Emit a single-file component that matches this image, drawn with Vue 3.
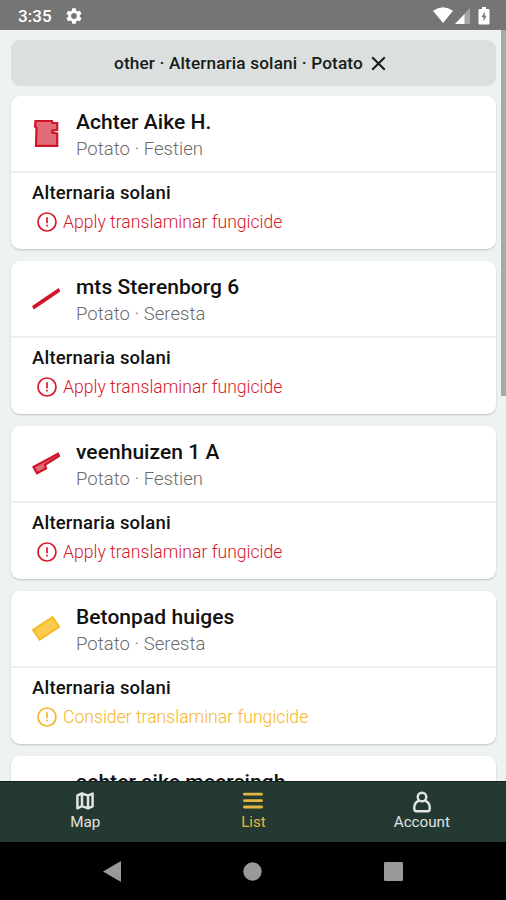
<script setup>
const fields = [
  { name: 'Achter Aike H.', crop: 'Potato · Festien', advice: 'Apply translaminar fungicide', tone: 'red', shape: 'M3.5 3H20L20.5 5H25.2V12L20.2 12.5V14.5L25.2 15.5V27.8H4L4.500 10L3 8.500Z' },
  { name: 'mts Sterenborg 6', crop: 'Potato · Seresta', advice: 'Apply translaminar fungicide', tone: 'red', shape: 'M1.500 23.500L26.300 6.700L27 8L2.200 24.800Z' },
  { name: 'veenhuizen 1 A', crop: 'Potato · Festien', advice: 'Apply translaminar fungicide', tone: 'red', shape: 'M1.500 19L26 5.800L27 8L13 16.800L14 20.500L5 25.300Z' },
  { name: 'Betonpad huiges', crop: 'Potato · Seresta', advice: 'Consider translaminar fungicide', tone: 'amber', shape: 'M1.2 17L20.5 4.2L27 13.8L7.6 26.5Z' },
  { name: 'achter aike meersingh', tone: 'amber' },
]
</script>

<template>
  <div class="screen">
    <header class="status">
      <span class="clock">3:35</span>
      <svg class="gear" width="18" height="18" viewBox="2 2 20 20"><path fill="#fff" d="M19.14 12.94a7 7 0 0 0 .05-.94 7 7 0 0 0-.06-.94l2.03-1.58a.49.49 0 0 0 .12-.61l-1.92-3.32a.49.49 0 0 0-.59-.22l-2.39.96a7 7 0 0 0-1.62-.94l-.36-2.54A.48.48 0 0 0 13.920 2.4h-3.84a.48.48 0 0 0-.47.41l-.36 2.54a7 7 0 0 0-1.62.94l-2.39-.96a.48.48 0 0 0-.59.22L2.740 8.870a.48.48 0 0 0 .12.610l2.030 1.580a7 7 0 0 0 0 1.880l-2.030 1.580a.49.49 0 0 0-.12.610l1.920 3.320c.12.220.370.290.590.220l2.390-.960a7 7 0 0 0 1.620.940l.360 2.540c.05.240.240.410.480.410h3.840c.240 0 .440-.170.470-.410l.360-2.540a7 7 0 0 0 1.620-.940l2.390.960c.220.080.470 0 .590-.220l1.920-3.320a.48.48 0 0 0-.12-.610zM12 15.600a3.600 3.600 0 1 1 0-7.200 3.600 3.600 0 0 1 0 7.200z" /></svg>
      <span class="spacer"></span>
      <svg width="20" height="17" viewBox="0 0 20 17"><path fill="#fff" d="M0 3.800Q10-3.200 20 3.800L10 16Z" /></svg>
      <svg class="signal" width="15" height="16" viewBox="0 0 15 16"><path fill="#a5a5a5" d="M15 0V16H0Z" /><path fill="#fff" d="M9.500 5.900V16H0Z" /></svg>
      <svg class="battery" width="12" height="18" viewBox="0 0 12 18"><path fill="#fff" d="M4 0H8V2H10.500Q11.500 2 11.500 3V16.500Q11.500 17.500 10.500 17.500H1.500Q.5 17.500.5 16.500V3Q.5 2 1.500 2H4Z" /><path fill="#777" d="M7.200 4.300L3.500 10H5.500V14.600L8.600 8.700H6.600Z" /></svg>
    </header>

    <main class="content">
      <div class="filter">
        <span>other · Alternaria solani · Potato</span>
        <svg width="15" height="15" viewBox="0 0 15 15"><path fill="none" stroke="#171c19" stroke-width="2" d="M1.200 1.200L13.800 13.800M13.800 1.200L1.200 13.800" /></svg>
      </div>
      <article v-for="field in fields" :key="field.name" class="card" :class="field.tone">
        <div class="summary">
          <svg class="plot" width="28" height="30" viewBox="0 0 28 30"><path v-if="field.shape" :d="field.shape" /></svg>
          <div>
            <h2>{{ field.name }}</h2>
            <p v-if="field.crop" class="crop">{{ field.crop }}</p>
          </div>
        </div>
        <div v-if="field.advice" class="detail">
          <h3>Alternaria solani</h3>
          <p class="advice">
            <svg width="20" height="20" viewBox="0 0 20 20" fill="none" stroke="currentColor" stroke-width="1.700"><circle cx="10" cy="10" r="9" /><path d="M10 5.300V11.300M10 12.700V14.400" /></svg>
            <span>{{ field.advice }}</span>
          </p>
        </div>
      </article>
      <div class="scrollbar"></div>
    </main>

    <nav class="tabs">
      <div class="tab map">
        <svg width="18" height="18" viewBox="0 0 18 18" fill="none" stroke="currentColor" stroke-width="2.500" stroke-linejoin="round"><path d="M1.400 3.500L6 1.500L12 3.700L16.600 1.600V14.300L12 16.400L6 14.200L1.400 16.300ZM6 1.500V14.200M12 3.700V16.400" /></svg>
        <span>Map</span>
      </div>
      <div class="tab active">
        <svg width="20" height="18" viewBox="0 0 20 18" fill="none" stroke="currentColor" stroke-width="2.800" stroke-linecap="round"><path d="M1.400 2.200H18.600M1.400 8.600H18.600M1.400 15H18.600" /></svg>
        <span>List</span>
      </div>
      <div class="tab account">
        <svg width="18" height="22" viewBox="0 0 18 22" fill="none" stroke="currentColor" stroke-width="2.400" stroke-linejoin="round"><circle cx="9" cy="6" r="4.300" /><path d="M6 9.700C2.800 11 1.300 13.200 1.300 16.500V18Q1.300 20.200 3.500 20.200H14.500Q16.700 20.200 16.700 18V16.500C16.700 13.200 15.200 11 12 9.700" /></svg>
        <span>Account</span>
      </div>
    </nav>

    <footer class="system">
      <svg width="18" height="21" viewBox="0 0 18 21"><path fill="#999" d="M0 10.500L18 0V21Z" /></svg>
      <svg width="19" height="19" viewBox="0 0 19 19"><circle cx="9.500" cy="9.500" r="9.200" fill="#999" /></svg>
      <svg width="19" height="19" viewBox="0 0 19 19"><rect width="19" height="19" rx="1.200" fill="#999" /></svg>
    </footer>
  </div>
</template>

<style>
body { margin: 0; }
</style>

<style scoped>
.screen {
  width: 506px;
  height: 900px;
  display: flex;
  flex-direction: column;
  overflow: hidden;
  background: #eef2f1;
  font-family: Roboto, sans-serif;
  color: #111;
}
h2, h3, p { margin: 0; }
svg { display: block; flex: none; }
.status {
  flex: none;
  box-sizing: border-box;
  height: 30px;
  padding: 1px 16px 0 18px;
  display: flex;
  align-items: center;
  background: #757575;
  color: #fff;
}
.clock { font-size: 17px; font-weight: 500; letter-spacing: 0.1px; }
.gear { width: 16px; height: 16px; margin-left: 14px; }
.spacer { flex: 1; }
.signal { margin-left: 2px; }
.battery { margin-left: 8px; }
.content {
  position: relative;
  flex: 1;
  min-height: 0;
  overflow: hidden;
  padding: 10px 10px 0 11px;
}
.filter {
  box-sizing: border-box;
  height: 46px;
  padding-right: 7px;
  display: flex;
  align-items: center;
  justify-content: center;
  gap: 8px;
  border-radius: 9px;
  background: #dbdfde;
  color: #171c19;
  font-size: 17.200px;
  font-weight: 500;
  letter-spacing: 0.150px;
}
.card {
  box-sizing: border-box;
  height: 153px;
  margin-top: 12.2px;
  border-radius: 9px;
  background: #fff;
  box-shadow: 0 1px 2px rgba(0, 20, 10, 0.2);
}
.filter + .card { margin-top: 9.500px; }
.summary {
  box-sizing: border-box;
  height: 77px;
  padding: 13px 0 0 21px;
  display: flex;
  gap: 16px;
  border-bottom: 2px solid #eef0f0;
}
.plot { margin-top: 9px; }
.plot path { stroke-width: 2.200; }
.red { color: #d7182a; }
.amber { color: #f6b628; }
.red .plot path { fill: #e26b78; stroke: #d01528; }
.amber .plot path { fill: #fccb4d; stroke: #f8bb28; }
h2 {
  color: #111;
  font-size: 21px;
  font-weight: 500;
  line-height: 26px;
  letter-spacing: 0.050px;
  white-space: nowrap;
}
.crop { padding-top: 1px; color: #6b6b6b; font-size: 18.500px; font-weight: 300; line-height: 26px; letter-spacing: 0.050px; }
.detail { padding: 7px 0 0 21px; }
h3 { color: #111; font-size: 18.500px; font-weight: 500; line-height: 26px; letter-spacing: 0.200px; }
.advice {
  display: flex;
  align-items: center;
  gap: 6px;
  height: 20px;
  margin-top: 6px;
  padding-left: 5px;
  font-size: 17.600px;
  font-weight: 300;
  white-space: nowrap;
}
.scrollbar {
  position: absolute;
  top: 0;
  right: 0;
  width: 5px;
  height: 366px;
  background: #a5a9a8;
}
.tabs {
  flex: none;
  box-sizing: border-box;
  height: 61px;
  padding-left: 1px;
  display: grid;
  grid-template-columns: 1fr 1fr 1fr;
  border-top: 1px solid #12231d;
  background: #233931;
  color: #e0e4e2;
  font-size: 15.200px;
}
.tab {
  display: flex;
  flex-direction: column;
  align-items: center;
  justify-content: flex-end;
  padding-bottom: 11px;
  gap: 3px;
  line-height: 18px;
}
.account { gap: 0; }
.active { color: #e5b544; }
.system {
  flex: none;
  box-sizing: border-box;
  height: 58px;
  padding: 0 103px;
  display: flex;
  align-items: center;
  justify-content: space-between;
  background: #000;
}
</style>
